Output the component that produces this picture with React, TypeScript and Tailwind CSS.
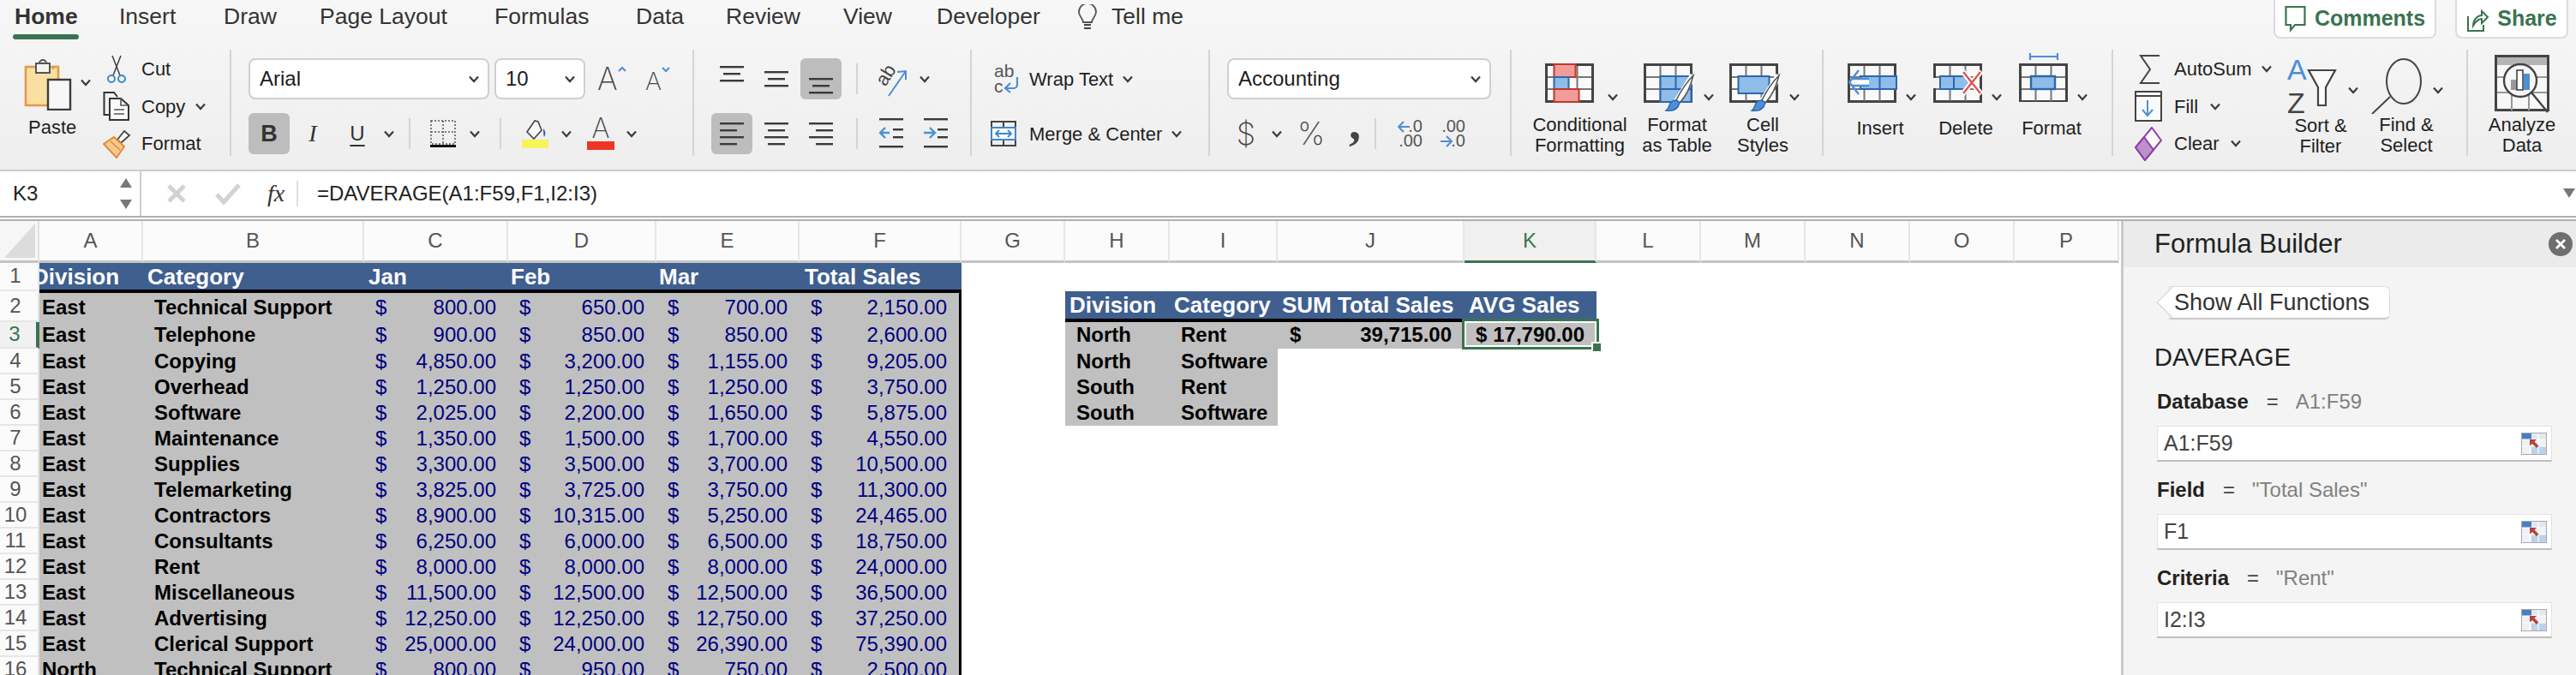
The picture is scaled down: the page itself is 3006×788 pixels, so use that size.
import React from 'react'

const COLS = 'grid grid-cols-[46px_121px_258px_168px_173px_167px_189px_121px_122px_126px_218px_154px_122px_122px_122px_122px_122px]'

const Chev = ({ className = '' }: { className?: string }) => (
  <svg width="12" height="9" viewBox="0 0 12 9" className={`shrink-0 ${className}`}>
    <path d="M1 1.5 6 7l5-5.5" fill="none" stroke="#3c3c3c" strokeWidth="2.2" />
  </svg>
)

const Divider = ({ className = '' }: { className?: string }) => <div className={`w-[2px] h-[36px] bg-[#d4d4d4] shrink-0 ${className}`} />

const Sheet = () => (
  <>
    <rect x="1.5" y="1.5" width="54" height="43" fill="#f9f9f9" stroke="#444" strokeWidth="3" />
    <path d="M19.5 3v41M37.5 3v41M3 16h51M3 30h51" stroke="#777" strokeWidth="2" fill="none" />
  </>
)

const Brush = () => (
  <>
    <path d="M58 14 38 46" stroke="#fff" strokeWidth="8" fill="none" />
    <path d="M58 14c-3 12-9 25-16 32l-4-3c5-10 12-21 20-29z" fill="#fff" stroke="#555" strokeWidth="1.6" />
    <path d="M38 43c-5 0-7 2-8 6-1 4-3 5-4 6 7 1 14-1 16-9z" fill="#4d8fd4" stroke="#2b67b0" strokeWidth="1.4" />
  </>
)

const CondIcon = () => (
  <svg width="60" height="56" viewBox="0 0 60 56">
    <Sheet />
    <rect x="10.5" y="1" width="25" height="15" fill="#f29b9b" stroke="#c2372c" strokeWidth="2" />
    <rect x="10.5" y="16" width="17" height="14" fill="#8fbce8" stroke="#2b67b0" strokeWidth="2" />
    <rect x="10.5" y="30" width="29" height="15" fill="#f29b9b" stroke="#c2372c" strokeWidth="2" />
  </svg>
)

const TableIcon = () => (
  <svg width="60" height="56" viewBox="0 0 60 56">
    <Sheet />
    <rect x="19.5" y="15" width="36" height="30" fill="#8fbce8" stroke="#2b67b0" strokeWidth="2" />
    <path d="M37.5 15v15M19.5 30h36" stroke="#2b67b0" strokeWidth="2" />
    <Brush />
  </svg>
)

const StylesIcon = () => (
  <svg width="60" height="56" viewBox="0 0 60 56">
    <Sheet />
    <rect x="10.5" y="15" width="36" height="20" fill="#8fbce8" stroke="#2b67b0" strokeWidth="2" />
    <Brush />
  </svg>
)

const InsertIcon = () => (
  <svg width="60" height="56" viewBox="0 0 60 56">
    <Sheet />
    <rect x="15" y="15" width="42" height="15" fill="#8fbce8" stroke="#2b67b0" strokeWidth="2" />
    <path d="M37.5 15v15" stroke="#2b67b0" strokeWidth="2" />
    <path d="M5 22h20" stroke="#fff" strokeWidth="7" />
    <path d="M13 8 2 22l11 14M5 18h20M5 26h20" fill="none" stroke="#4d8fd4" strokeWidth="2.4" />
  </svg>
)

const DeleteIcon = () => (
  <svg width="60" height="56" viewBox="0 0 60 56">
    <Sheet />
    <path d="M0 17h8v12H0z" fill="#f1f1f1" />
    <path d="M8 15h30l9 7-9 8H8z" fill="#8fbce8" stroke="#2b67b0" strokeWidth="2" />
    <path d="M24 15v15" stroke="#2b67b0" strokeWidth="2" />
    <path d="M34 9l22 27M56 9 34 36" stroke="#fff" strokeWidth="6" />
    <path d="M35 10l20 25M55 10 35 35" stroke="#e0544c" strokeWidth="2.4" />
  </svg>
)

const FormatIcon = () => (
  <svg width="60" height="58" viewBox="0 0 60 58">
    <path d="M13 5h32M13 1v8M45 1v8" stroke="#4d8fd4" strokeWidth="2.2" fill="none" />
    <g transform="translate(0 13)">
      <Sheet />
      <rect x="14" y="15" width="28" height="15" fill="#8fbce8" stroke="#2b67b0" strokeWidth="2.4" />
    </g>
  </svg>
)

const Scissors = () => (
  <svg width="24" height="34" viewBox="0 0 24 34">
    <path d="M7 1l9 23M17 1 8 24" stroke="#444" strokeWidth="1.6" fill="none" />
    <circle cx="6" cy="28" r="4" fill="none" stroke="#3f87cf" strokeWidth="2" />
    <circle cx="18" cy="28" r="4" fill="none" stroke="#3f87cf" strokeWidth="2" />
  </svg>
)

const CopyIcon = () => (
  <svg width="34" height="34" viewBox="0 0 34 34">
    <path d="M8 27H1.500V1H13l4 5" fill="none" stroke="#333" strokeWidth="2" />
    <path d="M8 8h13l9 8v17H8z" fill="#fafafa" stroke="#333" strokeWidth="2" />
    <path d="M21 8v8h9M13 21h12M13 26h12" fill="none" stroke="#555" strokeWidth="1.6" />
  </svg>
)

const FormatBrush = () => (
  <svg width="34" height="34" viewBox="0 0 34 34">
    <path d="M17 12 25 2l6 5-10 9z" fill="#fafafa" stroke="#444" strokeWidth="1.8" />
    <path d="M13 9l12 11-9 13L1 17z" fill="#f8c98d" stroke="#e28a3c" strokeWidth="2" />
    <path d="M9 14l11 10" stroke="#e28a3c" strokeWidth="1.6" />
  </svg>
)

const PasteIcon = () => (
  <svg width="56" height="62" viewBox="0 0 56 62">
    <rect x="2" y="11" width="38" height="45" fill="#f9dfa1" stroke="#e59a4c" strokeWidth="2.6" />
    <path d="M10 11h24v3" fill="none" stroke="#e59a4c" strokeWidth="2" />
    <rect x="14" y="7" width="16" height="11" fill="#f3f3f3" stroke="#555" strokeWidth="2" />
    <path d="M18 7a4 4 0 0 1 8 0" fill="none" stroke="#555" strokeWidth="2" />
    <rect x="28" y="26" width="26" height="35" fill="#f7f7f7" stroke="#3c3c3c" strokeWidth="2.4" />
  </svg>
)

const AlignIcon = ({ ys, widths, side }: { ys: number[]; widths: number[]; side: 'l' | 'c' | 'r' }) => (
  <svg width="48" height="48" viewBox="0 0 48 48">
    {ys.map((y, i) => {
      const w = widths[i]
      const x = side === 'l' ? 10 : side === 'r' ? 38 - w : 24 - w / 2
      return <rect key={i} x={x} y={y} width={w} height="2.4" fill="#3a3a3a" />
    })}
  </svg>
)

const IndentIcon = ({ flip }: { flip?: boolean }) => (
  <svg width="28" height="36" viewBox="0 0 28 36">
    <rect x="0" y="0" width="28" height="2.400" fill="#3a3a3a" />
    <rect x="0" y="32" width="28" height="2.400" fill="#3a3a3a" />
    <rect x="16" y="12" width="12" height="2.400" fill="#3a3a3a" />
    <rect x="16" y="21" width="12" height="2.400" fill="#3a3a3a" />
    {flip ? (
      <path d="M0 17h11M7 11l6 6-6 6" fill="none" stroke="#4d8fd4" strokeWidth="2.400" />
    ) : (
      <path d="M12 17H2M7 11l-6 6 6 6" fill="none" stroke="#4d8fd4" strokeWidth="2.400" />
    )}
  </svg>
)

const RefIcon = () => (
  <svg width="30" height="26" viewBox="0 0 30 26" className="shrink-0">
    <rect width="30" height="26" fill="#eef1f5" />
    <rect width="12" height="8" fill="#4a7ec4" />
    <rect x="12" width="18" height="8" fill="#e3e7ee" />
    <rect x="12" y="16" width="18" height="10" fill="#bcd2ea" />
    <path d="M10 8v18M20 0v26M0 8h30M0 16h30" stroke="#fff" strokeWidth="1.200" />
    <path d="M10 8h8l-2.500 2.500 5 5-2.500 2.500-5-5L10 15.500z" fill="#b8403c" />
    <rect x=".5" y=".5" width="29" height="25" fill="none" stroke="#aaa" />
  </svg>
)

const Group = ({ className, last, children }: { className: string; last?: boolean; children: React.ReactNode }) => (
  <div className={`h-[124px] mt-[12px] shrink-0 flex ${last ? '' : 'border-r-2 border-[#d4d4d4]'} ${className}`}>{children}</div>
)

const BigCol = ({ className, pad, icon, label, chevMl = 'ml-[13px]' }: { className: string; pad: string; icon: React.ReactNode; label: React.ReactNode; chevMl?: string }) => (
  <div className={`flex flex-col shrink-0 ${className}`}>
    <div className={`flex h-[80px] items-start ${pad}`}>
      {icon}
      <Chev className={`mt-[35px] ${chevMl}`} />
    </div>
    <div className="text-center text-[22px] leading-[24px] text-[#1f1f1f] whitespace-nowrap">{label}</div>
  </div>
)

const Select = ({ className, text }: { className: string; text: string }) => (
  <div className={`h-[48px] bg-white border-2 border-[#cfcfcf] rounded-[8px] flex items-center justify-between pl-[11px] pr-[10px] text-[24px] text-[#1c1c1c] shrink-0 ${className}`}>
    <span>{text}</span>
    <Chev />
  </div>
)

const tabs = [
  ['Insert', 'w-[122px]'],
  ['Draw', 'w-[112px]'],
  ['Page Layout', 'w-[204px]'],
  ['Formulas', 'w-[165px]'],
  ['Data', 'w-[105px]'],
  ['Review', 'w-[137px]'],
  ['View', 'w-[109px]'],
  ['Developer', 'w-[164px]'],
]

const TabBar = () => (
  <div className="h-[46px] flex text-[26.5px] text-[#333] pl-[17px]">
    <div className="w-[122px] shrink-0 flex flex-col">
      <div className="h-[40px] leading-[38px] font-bold">Home</div>
      <div className="h-[6px] w-[77px] -ml-[2px] rounded-[3px] bg-[#3b7350]" />
    </div>
    {tabs.map(([t, w]) => (
      <div key={t} className={`${w} shrink-0 leading-[38px]`}>{t}</div>
    ))}
    <div className="w-[40px] shrink-0 pt-[5px]">
      <svg width="24" height="31" viewBox="0 0 24 31">
        <path d="M7 21c0-4-5-7-5-12a10 10 0 0 1 20 0c0 5-5 8-5 12z" fill="none" stroke="#555" strokeWidth="1.800" />
        <path d="M8 24h8M8 28h8" stroke="#444" strokeWidth="2" />
      </svg>
    </div>
    <div className="leading-[38px]">Tell me</div>
    <div className="ml-auto flex gap-[22px] pr-[9px] text-[25px] font-bold text-[#3b7350]">
      <div className="w-[190px] h-[45px] bg-white border-2 border-t-0 border-[#dcdcdc] rounded-b-[8px] flex items-center justify-center gap-[10px]">
        <svg width="25" height="32" viewBox="0 0 25 32">
          <path d="M1.500 2h22v21H12l-5 6v-6H1.500z" fill="none" stroke="#3b7350" strokeWidth="2.200" />
        </svg>
        <span>Comments</span>
      </div>
      <div className="w-[132px] h-[45px] bg-white border-2 border-t-0 border-[#dcdcdc] rounded-b-[8px] flex items-center justify-center gap-[10px]">
        <svg width="26" height="32" viewBox="0 0 26 32">
          <path d="M2 13v17h18v-7" fill="none" stroke="#3b7350" strokeWidth="2" />
          <path d="M8 24c0-7 5-12 10-12V7l7 7-7 7v-5c-4 0-7 3-10 8z" fill="none" stroke="#3b7350" strokeWidth="2" />
        </svg>
        <span>Share</span>
      </div>
    </div>
  </div>
)

const ListRow = ({ icon, text, chev }: { icon: React.ReactNode; text: string; chev?: string }) => (
  <div className="h-[43.500px] flex items-center text-[22px] text-[#1f1f1f]">
    <div className="w-[42px] shrink-0 flex items-center">{icon}</div>
    <span>{text}</span>
    {chev && <Chev className={chev} />}
  </div>
)

const Ribbon = () => (
  <div className="h-[154px] flex border-b-2 border-[#cbcbcb]">
    <Group className="w-[270px]">
      <div className="w-[120px] shrink-0 pl-[28px] pt-[9px]">
        <div className="flex items-start">
          <PasteIcon />
          <Chev className="mt-[25px] ml-[10px]" />
        </div>
        <div className="text-[22px] leading-[24px] mt-[8px] ml-[5px] text-[#1f1f1f]">Paste</div>
      </div>
      <div className="pt-[1px]">
        <div className="h-[43.500px] flex items-center text-[22px] text-[#1f1f1f]"><div className="w-[45px] pl-[4px]"><Scissors /></div>Cut</div>
        <div className="h-[43.500px] flex items-center text-[22px] text-[#1f1f1f]"><div className="w-[45px]"><CopyIcon /></div>Copy<Chev className="ml-[12px]" /></div>
        <div className="h-[43.500px] flex items-center text-[22px] text-[#1f1f1f]"><div className="w-[45px]"><FormatBrush /></div>Format</div>
      </div>
    </Group>

    <Group className="w-[540px] flex-col pl-[20px] pt-[10px] gap-[16px]">
      <div className="flex items-center">
        <Select className="w-[281px]" text="Arial" />
        <Select className="w-[106px] ml-[6px]" text="10" />
        <div className="flex ml-[14px] w-[31px] text-[36px] leading-none text-[#444] font-['Inter',sans-serif] font-extralight">A<svg width="10" height="7" viewBox="0 0 10 7" className="mt-[3px] shrink-0"><path d="M1 6l4-4 4 4" fill="none" stroke="#4d8fd4" strokeWidth="2" /></svg></div>
        <div className="flex ml-[25px] w-[25px] text-[29px] leading-none text-[#444] mt-[4px] font-['Inter',sans-serif] font-extralight">A<svg width="10" height="7" viewBox="0 0 10 7" className="-mt-[2px] shrink-0"><path d="M1 1l4 4 4-4" fill="none" stroke="#4d8fd4" strokeWidth="2" /></svg></div>
      </div>
      <div className="flex items-center">
        <div className="w-[48px] h-[48px] rounded-[6px] bg-[#bdbdbd] flex items-center justify-center text-[27px] font-bold text-[#333] shrink-0">B</div>
        <div className="w-[54px] text-center text-[28px] font-['Liberation_Serif',serif] italic text-[#333] shrink-0">I</div>
        <div className="w-[50px] text-center text-[24px] text-[#333] underline underline-offset-[5px] shrink-0">U</div>
        <Chev className="ml-[6px]" />
        <Divider className="ml-[17px]" />
        <svg width="30" height="32" viewBox="0 0 30 32" className="ml-[23px] shrink-0">
          <path d="M1 1h28v27H1zM15 1v27M1 14h28" fill="none" stroke="#555" strokeWidth="1.500" strokeDasharray="2 2" />
          <rect x="0" y="29" width="30" height="3" fill="#111" />
        </svg>
        <Chev className="ml-[16px]" />
        <Divider className="ml-[23px]" />
        <svg width="32" height="34" viewBox="0 0 32 34" className="ml-[24px] shrink-0">
          <path d="M15 2 6 15l8 8 9-10-4-10z" fill="#fafafa" stroke="#444" strokeWidth="1.600" />
          <path d="M25 11c3 3 3 7 1 10-1-3-1-6-1-10z" fill="#2b67b0" />
          <rect x="0" y="24" width="31" height="10" fill="#f8f35a" />
        </svg>
        <Chev className="ml-[14px]" />
        <div className="ml-[18px] w-[32px] flex flex-col items-center shrink-0">
          <div className="text-[32px] leading-[26px] text-[#444] font-['Inter',sans-serif] font-extralight">A</div>
          <div className="w-[32px] h-[10px] bg-[#ef3524] mt-[2px]" />
        </div>
        <Chev className="ml-[14px]" />
      </div>
    </Group>

    <Group className="w-[324px] flex-col pl-[20px] pt-[10px] gap-[16px]">
      <div className="flex items-center h-[48px]">
        <AlignIcon side="c" ys={[9, 17, 25]} widths={[28, 20, 28]} />
        <div className="ml-[4px]"><AlignIcon side="c" ys={[15, 23, 31]} widths={[28, 20, 28]} /></div>
        <div className="ml-[4px] rounded-[6px] bg-[#bdbdbd]"><AlignIcon side="c" ys={[23, 31, 39]} widths={[28, 20, 28]} /></div>
        <Divider className="ml-[17px]" />
        <svg width="34" height="42" viewBox="0 0 34 42" className="ml-[24px] shrink-0 overflow-visible">
          <text x="-1" y="26" fontSize="22" fill="#444" transform="rotate(-58 8 20)" fontFamily="Liberation Sans">ab</text>
          <path d="M12 41 32 12M22 13l10-1 0 10" fill="none" stroke="#4d8fd4" strokeWidth="2" />
        </svg>
        <Chev className="ml-[14px]" />
      </div>
      <div className="flex items-center h-[48px]">
        <div className="rounded-[6px] bg-[#bdbdbd]"><AlignIcon side="l" ys={[11, 19, 27, 35]} widths={[28, 20, 28, 20]} /></div>
        <div className="ml-[4px]"><AlignIcon side="c" ys={[11, 19, 27, 35]} widths={[28, 20, 28, 20]} /></div>
        <div className="ml-[4px]"><AlignIcon side="r" ys={[11, 19, 27, 35]} widths={[28, 20, 28, 20]} /></div>
        <Divider className="ml-[17px]" />
        <div className="ml-[25px]"><IndentIcon /></div>
        <div className="ml-[24px]"><IndentIcon flip /></div>
      </div>
    </Group>

    <Group className="w-[278px] flex-col pt-[10px] gap-[16px] text-[22px] text-[#1f1f1f]">
      <div className="flex items-center h-[48px] pl-[26px]">
        <svg width="32" height="34" viewBox="0 0 32 34" className="shrink-0 overflow-visible">
          <text x="0" y="15" fontSize="21" fill="#555" fontFamily="Liberation Sans">ab</text>
          <text x="0" y="33" fontSize="21" fill="#555" fontFamily="Liberation Sans">c</text>
          <path d="M27 15v9a4 4 0 0 1-4 4H13M19 22l-6 6 6 5" fill="none" stroke="#4d8fd4" strokeWidth="2.200" />
        </svg>
        <span className="ml-[9px]">Wrap Text</span>
        <Chev className="ml-[11px]" />
      </div>
      <div className="flex items-center h-[48px] pl-[22px]">
        <svg width="30" height="30" viewBox="0 0 30 30" className="shrink-0">
          <path d="M1 1h28v28H1zM15 1v7M15 22v7" fill="none" stroke="#444" strokeWidth="2" />
          <rect x="1" y="8" width="28" height="14" fill="#fafafa" stroke="#3f87cf" strokeWidth="2" />
          <path d="M6 15h18M10 11l-4 4 4 4M20 11l4 4-4 4" fill="none" stroke="#3f87cf" strokeWidth="1.800" />
        </svg>
        <span className="ml-[15px]">Merge &amp; Center</span>
        <Chev className="ml-[11px]" />
      </div>
    </Group>

    <Group className="w-[352px] flex-col pl-[20px] pt-[10px] gap-[16px]">
      <Select className="w-[308px]" text="Accounting" />
      <div className="flex items-center h-[48px] text-[#444]">
        <div className="w-[44px] text-center text-[36px] font-['Inter',sans-serif] font-extralight">$</div>
        <Chev className="ml-[8px]" />
        <div className="ml-[18px] text-[36px] font-['Inter',sans-serif] font-extralight w-[32px] text-center">%</div>
        <div className="ml-[20px] w-[30px] h-[40px] text-center text-[56px] font-['Liberation_Serif',serif] font-bold leading-[14px]">,</div>
        <Divider className="ml-[8px]" />
        <div className="ml-[24px] w-[30px] text-[20px] leading-[17px] text-[#555]">
          <div className="flex justify-end items-center">
            <svg width="16" height="16" viewBox="0 0 16 16" className="-mr-[3px]"><path d="M15 8H2M8 2 2 8l6 6" fill="none" stroke="#4d8fd4" strokeWidth="2" /></svg>
            .0
          </div>
          <div className="text-right">.00</div>
        </div>
        <div className="ml-[20px] w-[30px] text-[20px] leading-[17px] text-[#555]">
          <div className="text-right">.00</div>
          <div className="flex justify-end items-center">
            <svg width="16" height="16" viewBox="0 0 16 16" className="-mr-[3px]"><path d="M1 8h13M8 2l6 6-6 6" fill="none" stroke="#4d8fd4" strokeWidth="2" /></svg>
            .0
          </div>
        </div>
      </div>
    </Group>

    <Group className="w-[364px] pl-[23px]">
      <BigCol className="w-[113px]" pad="pl-[16px] pt-[16px]" icon={<CondIcon />} label={<>Conditional<br />Formatting</>} />
      <BigCol className="w-[114px]" pad="pl-[18px] pt-[16px]" icon={<TableIcon />} label={<>Format<br />as Table</>} chevMl="ml-[10px]" />
      <BigCol className="w-[100px] -ml-[7px]" pad="pl-[11px] pt-[16px]" icon={<StylesIcon />} label={<>Cell<br />Styles</>} chevMl="ml-[10px]" />
    </Group>

    <Group className="w-[338px] pl-[16px]">
      <BigCol className="w-[100px]" pad="pl-[12px] pt-[16px]" icon={<InsertIcon />} label="Insert" chevMl="ml-[8px]" />
      <BigCol className="w-[100px]" pad="pl-[12px] pt-[16px]" icon={<DeleteIcon />} label="Delete" chevMl="ml-[8px]" />
      <BigCol className="w-[100px]" pad="pl-[12px] pt-[3px]" icon={<FormatIcon />} label="Format" chevMl="ml-[8px] !mt-[48px]" />
    </Group>

    <Group className="w-[414px] pl-[29px]">
      <div className="w-[163px] shrink-0 pt-[1px]">
        <ListRow
          text="AutoSum"
          chev="ml-[11px]"
          icon={<svg width="26" height="38" viewBox="0 0 26 38"><path d="M25 3H3l11 16L3 35h22" fill="none" stroke="#444" strokeWidth="2" /></svg>}
        />
        <ListRow
          text="Fill"
          chev="ml-[14px]"
          icon={
            <svg width="32" height="36" viewBox="0 0 32 36" className="-ml-[4px]">
              <rect x="1" y="1" width="30" height="34" fill="#fafafa" stroke="#444" strokeWidth="2" />
              <path d="M1 6h30" stroke="#444" strokeWidth="2" />
              <path d="M15 11v17M9 22l6 7 6-7" fill="none" stroke="#4d8fd4" strokeWidth="2" />
            </svg>
          }
        />
        <ListRow
          text="Clear"
          chev="ml-[13px]"
          icon={
            <svg width="32" height="40" viewBox="0 0 32 40" className="-ml-[4px]">
              <path d="M20 1l11 15-19 23L1 24z" fill="#fafafa" stroke="#8c3fa8" strokeWidth="2" />
              <path d="M1 24l11 15 10-12-11-15z" fill="#bd8fcc" stroke="#8c3fa8" strokeWidth="2" />
            </svg>
          }
        />
      </div>
      <BigCol
        className="w-[100px]"
        pad="pl-[11px] pt-[9px]"
        chevMl="ml-[13px] !mt-[34px]"
        icon={
          <svg width="58" height="68" viewBox="0 0 58 68" className="overflow-visible">
            <text x="0" y="26" fontSize="34" fill="#4d8fd4" fontFamily="Liberation Sans">A</text>
            <text x="0" y="65" fontSize="34" fill="#444" fontFamily="Liberation Sans">Z</text>
            <path d="M25 15h31L45 35v21H36V35z" fill="#fafafa" stroke="#444" strokeWidth="2.200" />
          </svg>
        }
        label={<>Sort &amp;<br />Filter</>}
      />
      <BigCol
        className="w-[100px]"
        pad="pl-[9px] pt-[9px]"
        chevMl="ml-[12px] !mt-[34px]"
        icon={
          <svg width="60" height="66" viewBox="0 0 60 66">
            <ellipse cx="38" cy="28" rx="20" ry="26" fill="none" stroke="#444" strokeWidth="2" />
            <path d="M22 46 1 66" stroke="#444" strokeWidth="2" />
          </svg>
        }
        label={<>Find &amp;<br />Select</>}
      />
    </Group>

    <Group className="w-[126px]" last>
      <div className="w-full flex flex-col items-center">
        <div className="h-[80px] pt-[6px]">
          <svg width="64" height="68" viewBox="0 0 64 68">
            <rect x="1.500" y="1.500" width="61" height="63" fill="#f7f7f7" stroke="#444" strokeWidth="3" />
            <rect x="3" y="3" width="58" height="9" fill="#b5b5b5" />
            <path d="M3 26h58M3 44h58M20 44v21M40 44v21" stroke="#999" strokeWidth="2" />
            <circle cx="30" cy="30" r="19" fill="#f7f7f7" stroke="#444" strokeWidth="2.400" />
            <rect x="19" y="29" width="8" height="12" fill="#999" />
            <rect x="26" y="18" width="7" height="23" fill="#fff" stroke="#444" strokeWidth="1.600" />
            <rect x="34" y="22" width="7" height="19" fill="#4d8fd4" />
            <path d="M43 44l19 23" stroke="#444" strokeWidth="2.400" />
          </svg>
        </div>
        <div className="text-center text-[22px] leading-[24px] text-[#1f1f1f]">Analyze<br />Data</div>
      </div>
    </Group>
  </div>
)

const FormulaBar = () => (
  <div className="h-[58px] bg-white flex border-b-[6px] border-double border-[#b0b0b0]">
    <div className="w-[165px] shrink-0 border-r-2 border-[#cfcfcf] flex items-center justify-between pl-[15px] pr-[8px] text-[24px] text-[#222]">
      <span>K3</span>
      <svg width="16" height="36" viewBox="0 0 16 36">
        <path d="M8 0l7 11H1zM8 36l7-11H1z" fill="#777" />
      </svg>
    </div>
    <svg width="30" height="30" viewBox="0 0 30 30" className="ml-[26px] mt-[11px] shrink-0">
      <path d="M6 6l18 18M24 6 6 24" stroke="#d2d2d2" strokeWidth="5" />
    </svg>
    <svg width="34" height="30" viewBox="0 0 34 30" className="ml-[28px] mt-[11px] shrink-0">
      <path d="M4 16l8 9L30 5" fill="none" stroke="#d2d2d2" strokeWidth="5" />
    </svg>
    <div className="ml-[29px] w-[34px] text-[28px] leading-[52px] italic font-['Liberation_Serif',serif] text-[#333] shrink-0">fx</div>
    <div className="w-[2px] h-[30px] mt-[11px] bg-[#dedede] shrink-0" />
    <div className="ml-[22px] text-[24px] leading-[52px] text-[#222]">=DAVERAGE(A1:F59,F1,I2:I3)</div>
    <svg width="14" height="11" viewBox="0 0 14 11" className="ml-auto mr-[1px] mt-[20px]">
      <path d="M0 0h14L7 11z" fill="#777" />
    </svg>
  </div>
)

type Row = [string, string, string, string, string, string]
const data: Row[] = [
  ['East', 'Technical Support', '800.00', '650.00', '700.00', '2,150.00'],
  ['East', 'Telephone', '900.00', '850.00', '850.00', '2,600.00'],
  ['East', 'Copying', '4,850.00', '3,200.00', '1,155.00', '9,205.00'],
  ['East', 'Overhead', '1,250.00', '1,250.00', '1,250.00', '3,750.00'],
  ['East', 'Software', '2,025.00', '2,200.00', '1,650.00', '5,875.00'],
  ['East', 'Maintenance', '1,350.00', '1,500.00', '1,700.00', '4,550.00'],
  ['East', 'Supplies', '3,300.00', '3,500.00', '3,700.00', '10,500.00'],
  ['East', 'Telemarketing', '3,825.00', '3,725.00', '3,750.00', '11,300.00'],
  ['East', 'Contractors', '8,900.00', '10,315.00', '5,250.00', '24,465.00'],
  ['East', 'Consultants', '6,250.00', '6,000.00', '6,500.00', '18,750.00'],
  ['East', 'Rent', '8,000.00', '8,000.00', '8,000.00', '24,000.00'],
  ['East', 'Miscellaneous', '11,500.00', '12,500.00', '12,500.00', '36,500.00'],
  ['East', 'Advertising', '12,250.00', '12,250.00', '12,750.00', '37,250.00'],
  ['East', 'Clerical Support', '25,000.00', '24,000.00', '26,390.00', '75,390.00'],
  ['North', 'Technical Support', '800.00', '950.00', '750.00', '2,500.00'],
]

const RowHead = ({ n, active }: { n: number; active?: boolean }) => (
  <div className={`flex items-center justify-center pr-[8px] text-[24px] leading-[24px] pb-[1px] border-b-2 border-[#e6e6e6] ${active ? 'bg-[#f1f1f1] text-[#3b7350] border-r-4 border-r-[#3b7350] pr-[4px]' : 'bg-[#fbfbfb] text-[#555] border-r-2 border-r-[#e6e6e6]'}`}>{n}</div>
)

const Money = ({ v, className = '' }: { v: string; className?: string }) => (
  <div className={`bg-[#c0c0c0] text-[#000080] text-[24px] leading-[24px] flex items-center justify-between pl-[13px] pr-[14px] pb-[1px] ${className}`}>
    <span>$</span>
    <span>{v}</span>
  </div>
)

const side: Record<number, string[]> = { 3: ['North', 'Rent'], 4: ['North', 'Software'], 5: ['South', 'Rent'], 6: ['South', 'Software'] }

const B = ({ t, className }: { t: string; className: string }) => (
  <div className={`bg-[#c0c0c0] text-[24px] leading-[24px] font-bold text-black flex items-center whitespace-nowrap pb-[1px] ${className}`}>{t}</div>
)

const Head = ({ t, className = '' }: { t: string; className?: string }) => (
  <div className={`bg-[#3f5f8f] text-white text-[26px] leading-[26px] font-bold flex items-center whitespace-nowrap overflow-hidden ${className}`}>{t}</div>
)

const Spreadsheet = () => (
  <div className="w-[2475px] shrink-0 overflow-hidden">
    <div className={`${COLS} h-[49px]`}>
      <div className="bg-[#f6f6f6] border-r-2 border-[#e2e2e2] border-b-[3px] border-b-[#c4c4c4] flex items-end justify-end p-[3px]">
        <svg width="36" height="40" viewBox="0 0 36 40"><path d="M36 0v40H0z" fill="#dcdcdc" /></svg>
      </div>
      {'ABCDEFGHIJKLMNOP'.split('').map(c => (
        <div
          key={c}
          className={`flex items-center justify-center text-[24px] border-r-2 border-[#e6e6e6] border-b-[3px] ${c === 'K' ? 'bg-[#f0f0f0] text-[#3b7350] border-b-[#3b7350]' : 'bg-[#fbfbfb] text-[#555] border-b-[#c4c4c4]'}`}
        >
          {c}
        </div>
      ))}
    </div>

    <div className={`${COLS} h-[33px]`}>
      <RowHead n={1} />
      <div className="bg-[#3f5f8f] overflow-hidden border-b-2 border-black flex items-center"><span className="text-white text-[26px] leading-[26px] font-bold -ml-[8px]">Division</span></div>
      <Head t="Category" className="border-b-2 border-black pl-[5px]" />
      <Head t="Jan" className="border-b-2 border-black pl-[5px]" />
      <Head t="Feb" className="border-b-2 border-black pl-[3px]" />
      <Head t="Mar" className="border-b-2 border-black pl-[3px]" />
      <Head t="Total Sales" className="border-b-2 border-black pl-[6px]" />
    </div>

    {data.map((r, i) => {
      const n = i + 2
      const h = n === 2 ? 'h-[36px]' : n === 3 ? 'h-[31px]' : 'h-[30px]'
      const top = n === 2 ? 'border-t-2 border-black' : ''
      return (
        <div key={n} className={`${COLS} ${h}`}>
          <RowHead n={n} active={n === 3} />
          <B t={r[0]} className={`pl-[3px] ${top}`} />
          <B t={r[1]} className={`pl-[13px] ${top}`} />
          <Money v={r[2]} className={top} />
          <Money v={r[3]} className={top} />
          <Money v={r[4]} className={top} />
          <Money v={r[5]} className={`border-r-[3px] border-r-black ${top}`} />
          <div />
          {n === 2 && (
            <>
              <Head t="Division" className="border-b-4 border-black pl-[5px]" />
              <Head t="Category" className="border-b-4 border-black pl-[5px]" />
              <Head t="SUM Total Sales" className="border-b-4 border-black pl-[5px]" />
              <Head t="AVG Sales" className="pl-[5px] pb-[4px]" />
            </>
          )}
          {side[n] && (
            <>
              <B t={side[n][0]} className="pl-[13px]" />
              <B t={side[n][1]} className="pl-[13px]" />
            </>
          )}
          {n === 3 && (
            <>
              <div className="bg-[#c0c0c0] text-[24px] leading-[24px] font-bold flex items-center justify-between pl-[14px] pr-[15px] pb-[1px]">
                <span>$</span>
                <span>39,715.00</span>
              </div>
              <div className="bg-[#c0c0c0] text-[24px] leading-[24px] font-bold flex items-center justify-between pl-[13px] pr-[14px] pb-[1px] relative">
                <span>$</span>
                <span>17,790.00</span>
                <div className="absolute -left-[3px] -right-[3px] -top-[4px] -bottom-[1px] border-[3px] border-[#3b7350]">
                  <div className="w-full h-full border-2 border-white" />
                </div>
                <div className="absolute -right-[5px] -bottom-[3px] w-[11px] h-[11px] bg-[#3b7350] border-l-2 border-t-2 border-white" />
              </div>
            </>
          )}
        </div>
      )
    })}
  </div>
)

const Arg = ({ name, value, input, className = '' }: { name: string; value: string; input: string; className?: string }) => (
  <div className={`pl-[39px] ${className}`}>
    <div className="flex items-center h-[30px] text-[24px]">
      <span className="font-bold text-[#222]">{name}</span>
      <span className="text-[#444] ml-[21px]">=</span>
      <span className="text-[#808080] ml-[20px]">{value}</span>
    </div>
    <div className="mt-[13px] w-[461px] h-[42px] bg-white border border-[#e2e2e2] border-b-2 border-b-[#bdbdbd] flex items-center justify-between pl-[7px] pr-[5px] text-[25px] text-[#444]">
      <span>{input}</span>
      <RefIcon />
    </div>
  </div>
)

const Panel = () => (
  <div className="flex-1 bg-[#f4f4f4] border-l-[3px] border-[#c9c9c9]">
    <div className="h-[54px] bg-[#ebebeb] flex items-center justify-between pl-[36px] pr-[4px] text-[31px] text-[#222]">
      <span>Formula Builder</span>
      <div className="w-[28px] h-[28px] rounded-full bg-[#6f6f6f] flex items-center justify-center">
        <svg width="14" height="14" viewBox="0 0 14 14"><path d="M2 2l10 10M12 2 2 12" stroke="#fff" strokeWidth="2.800" /></svg>
      </div>
    </div>
    <div className="pl-[38px] pt-[22px]">
      <div className="relative w-[258px] ml-[15px] h-[39px] bg-white border border-[#dcdcdc] border-b-2 border-b-[#c9c9c9] rounded-r-[6px] flex items-center pl-[5px] text-[27px] text-[#333] whitespace-nowrap">
        <div className="absolute -left-[10px] top-[5px] w-[26px] h-[26px] rotate-45 bg-white border-l border-b border-[#cfcfcf]" />
        <span className="relative">Show All Functions</span>
      </div>
    </div>
    <div className="pl-[36px] mt-[26px] text-[29px] leading-[36px] text-[#222]">DAVERAGE</div>
    <Arg className="mt-[19px]" name="Database" value="A1:F59" input="A1:F59" />
    <Arg className="mt-[18px]" name="Field" value={'"Total Sales"'} input="F1" />
    <Arg className="mt-[18px]" name="Criteria" value={'"Rent"'} input="I2:I3" />
  </div>
)

export default function App() {
  return (
    <div className="w-[3006px] h-[788px] overflow-hidden font-['Liberation_Sans',Arial,sans-serif] bg-white">
      <div className="bg-gradient-to-b from-[#f7f7f7] to-[#eeeeee]">
        <TabBar />
        <Ribbon />
      </div>
      <FormulaBar />
      <div className="flex h-[530px]">
        <Spreadsheet />
        <Panel />
      </div>
    </div>
  )
}
